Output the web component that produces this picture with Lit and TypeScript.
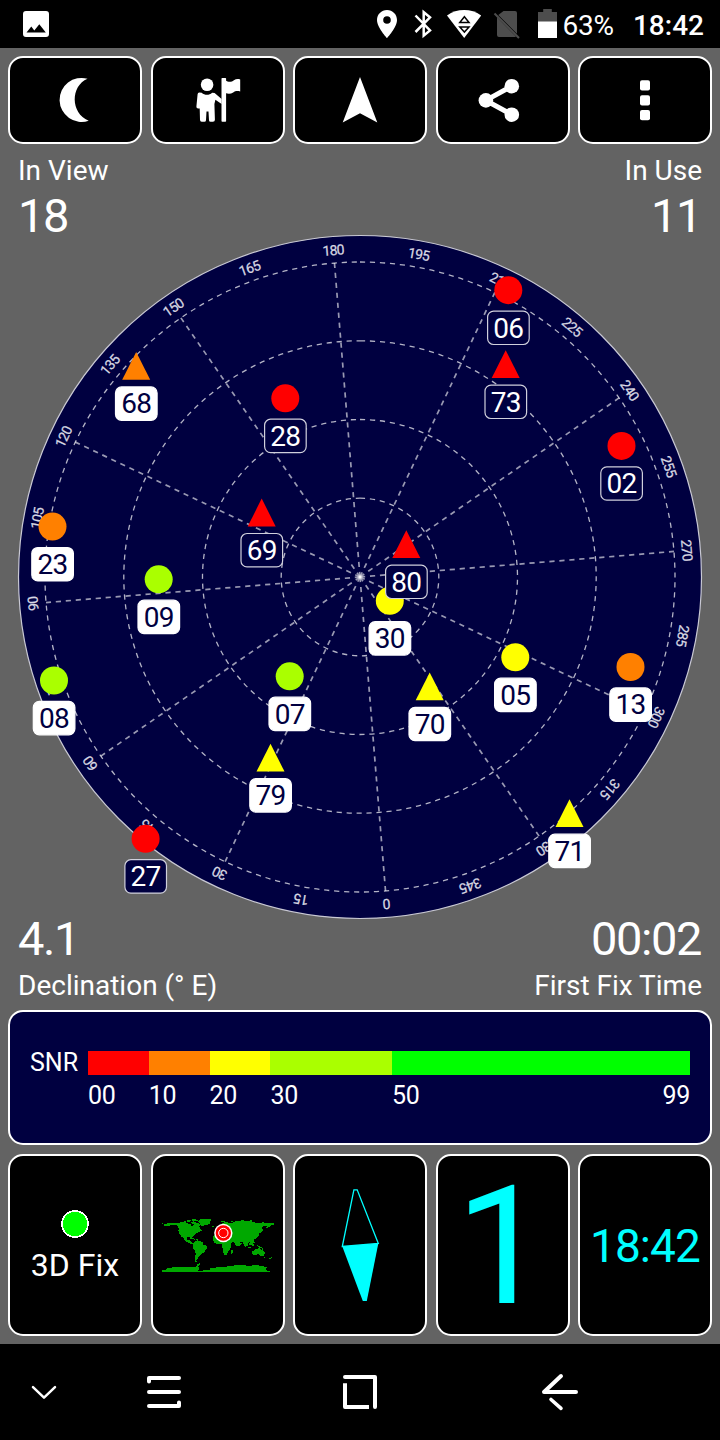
import { LitElement, html, svg, css } from "lit";
import { customElement } from "lit/decorators.js";

type Shape = "circle" | "triangle";
interface Satellite { id: string; x: number; y: number; color: string; shape: Shape; used: boolean; }

const RED = "#ff0000";
const ORANGE = "#ff8000";
const YELLOW = "#ffff00";
const LIME = "#aaff00";
const GREEN = "#00ff00";

const sat = (id: string, x: number, y: number, color: string, shape: Shape, used: boolean): Satellite => ({ id, x, y, color, shape, used });

const SATELLITES: Satellite[] = [
  sat("30", 389.8, 600.8, YELLOW, "circle", true),
  sat("68", 136.2, 366, ORANGE, "triangle", true),
  sat("06", 508.3, 290.2, RED, "circle", false),
  sat("73", 505.7, 364.2, RED, "triangle", false),
  sat("28", 285.3, 398.3, RED, "circle", false),
  sat("02", 621.5, 445.9, RED, "circle", false),
  sat("23", 52.5, 526.6, ORANGE, "circle", true),
  sat("69", 261.7, 512.6, RED, "triangle", false),
  sat("80", 406.3, 544.2, RED, "triangle", false),
  sat("09", 158.7, 579.3, LIME, "circle", true),
  sat("05", 515.3, 657.3, YELLOW, "circle", true),
  sat("13", 630.5, 667, ORANGE, "circle", true),
  sat("08", 54, 680.5, LIME, "circle", true),
  sat("07", 289.7, 676.3, LIME, "circle", true),
  sat("70", 429.7, 686.4, YELLOW, "triangle", true),
  sat("79", 270.5, 757.8, YELLOW, "triangle", true),
  sat("71", 569.5, 813.3, YELLOW, "triangle", true),
  sat("27", 145.6, 838.8, RED, "circle", false),
];

const CX = 360;
const CY = 577;
const HEADING = 175.35;
const RINGS = [315, 236.2, 157.5, 78.8];

const SNR = [
  { from: 0, to: 10, color: RED },
  { from: 10, to: 20, color: ORANGE },
  { from: 20, to: 30, color: YELLOW },
  { from: 30, to: 50, color: LIME },
  { from: 50, to: 99, color: GREEN },
];

@customElement("sky-plot")
class SkyPlot extends LitElement {
  static styles = css`
    :host { display: block; }
    svg { display: block; }
    .disc { fill: #000040; stroke: #c9c9d4; stroke-width: 1.2; }
    .grid { fill: none; stroke: #ffffff; stroke-opacity: 0.7; stroke-width: 1.3; stroke-dasharray: 5.2 4.8; }
    .spoke { stroke-width: 1.7; stroke-opacity: 0.6; }
    .deg { font: 14px Roboto, sans-serif; fill: #d8d8e2; stroke: #d8d8e2; stroke-width: 0.25; text-anchor: middle; letter-spacing: -0.8px; }
    .tag { stroke: #d0d0dc; stroke-width: 1.2; fill: #000040; }
    .tag.used { fill: #ffffff; stroke: #ffffff; }
    .num { font: 28px Roboto, sans-serif; fill: #ffffff; text-anchor: middle; letter-spacing: -0.7px; }
    .num.used { fill: #000040; }
  `;

  private spoke(deg: number) {
    const a = ((deg + HEADING) * Math.PI) / 180;
    return svg`<line class="grid spoke" x1=${CX} y1=${CY} x2=${CX + 315 * Math.sin(a)} y2=${CY - 315 * Math.cos(a)} />`;
  }

  private mark(deg: number) {
    return svg`<text class="deg" x=${CX - 0.3} y=${CY - 323} transform="rotate(${deg + HEADING} ${CX} ${CY})">${deg}</text>`;
  }

  private satellite(s: Satellite) {
    const used = s.used ? "used" : "";
    return svg`
      ${s.shape === "circle"
        ? svg`<circle cx=${s.x} cy=${s.y} r="14" fill=${s.color} />`
        : svg`<polygon fill=${s.color} points="${s.x},${s.y - 14} ${s.x + 14},${s.y + 13.8} ${s.x - 14},${s.y + 13.8}" />`}
      <rect class="tag ${used}" x=${s.x - 20.7} y=${s.y + 20.9} width="41.6" height="33.4" rx="6" />
      <text class="num ${used}" x=${s.x} y=${s.y + 47.4}>${s.id}</text>`;
  }

  render() {
    const marks = Array.from({ length: 24 }, (_, i) => i * 15);
    return html`<svg width="720" height="866" viewBox="0 144 720 866">
      <circle class="disc" cx=${CX} cy=${CY} r="341.5" />
      ${RINGS.map((r) => svg`<circle class="grid" cx=${CX} cy=${CY} r=${r} transform="rotate(-90 ${CX} ${CY})" />`)}
      ${marks.filter((d) => d % 30 === 0).map((d) => this.spoke(d))}
      ${marks.map((d) => this.mark(d))}
      ${SATELLITES.map((s) => this.satellite(s))}
    </svg>`;
  }
}

@customElement("world-map")
class WorldMap extends LitElement {
  static styles = css`
    :host { display: block; margin: 2.5px 0 0 1px; }
    svg { display: block; }
    .land { fill: #00a800; }
  `;
  render() {
    return html`<svg width="116" height="60" viewBox="30 48 348 180">
      <g class="land" shape-rendering="crispEdges">
        <path d="M36 69h4v4h-4zM48 72l6-3h34l4-3h8l4 3h8l6 3h6l-2 5 6 2 2-5 8-2 6 5 4 5 4 2-2 4 6 1v5h-6l-4 3-7 3-5 6-4 3-4 2v6h-3l-2-5-8-1-3 4 2 5h7v4l5 1 2 5h5v3h-8l-4-4-9-3-7-6-3-7-6-3-7-10-2-10 2-5-6-8-8-3-8 1-12 3-6-1-6 2v-5l3-2z" />
        <path d="M96 66l9-3 5 3-5 3h-9zM110 62l7-2h8l-4 5-9 2zM122 66l10-2 6 4 8 2 5 5-3 5-6-3-6-1-4-4-8-2zM126 58h12l8 3-10 3-10-1zM106 72h10v3h-10z" />
        <path d="M147 60l8-3h28v5l-4 3v6l-7 3-9 2-4 4-7-3-3-8-5-5z" />
        <path d="M120 114h10l5 3-1 2-14-3zM137 117h8v3h-8z" />
        <path d="M135 123l7-2 10 3 7 4v6l12 4v6l-6 7-2 6-7 3-4 6-7 5-2 6-4 2-1 8h-3l-1-12 3-13-1-8-7-9-1-7 3-8z" />
        <path d="M137 183h5v4h-5zM146 188h3v4h-3zM141 192h5v4h-5zM187 77h6v3h-6z" />
        <path d="M190 111l2-6 9-8h21l4 3 13-1 4 8 1 7 5 3h4l-5 8-5 6 1 8-4 8-5 8-5 9h-7l-3-5-2-11-1-12-4-5-12 1-9-5-3-9zM244 151l5-3v7l-3 6h-3z" />
        <path d="M195 91l4-8 6-3 6-6 8-6 12-2 7 4 5-2 5 1 2-4 8-1 9-1 7-2 6-1 7 3 10-1 8-1-2 4 8 1 8 3h13l8-3 6 3h25v7h-8l-5 4-6 5-3-2 1-6-10 2-6 6 5 2-1 5-6 6-5 3-2 9-5 2-4 5-5 3-3 7 4 6-1 4h-4l-5-10-7 1-7 12h-4l-5-13-8-2-3 2 7 3-5 7-9 3-6-8-4-7-13-1-5-4-6-2-6 3-8-2z" />
        <path d="M213 62h12v3h-12zM242 64l7-3v3l-4 3zM301 62h5v3h-5z" />
        <path d="M283 124l5 4 7 8-2 3-9-9zM293 140h10v3h-10zM298 128l7-3 2 6-3 6-6-3zM307 132h4l1 6-5-2zM302 112h3l1 7-3 1zM309 120l4 4 2 6h-4zM315 96h4v5l-6 5-4 1v-3l4-3zM319 136l8 1 6 4 5 4-7-1-6-2z" />
        <path d="M307 154l8-5 7-3 5-2 4 2 3 5 3-7 3 7 5 6-2 6-3 6h-8l-3-5-7-1-8 3h-6zM341 171h4v3h-4z" />
        <path d="M360 174h2v-3h3v-3h2v5l-6 5h-4v-3z" />
        <path d="M36 209h9l6-1v-3l16-1v-2h22v-2h40l8 1 3-5 5-4 4-3v5l-4 5 3 4v6l-8 2 15 2 8-3 16-1v-3l16-3 17-2h20v-3l20 1v-3h35l3 3h16l1-3h19l7 2 11 2 7 2-3 5v3l5 3h6v4H36z" />
      </g>
      <circle cx="220" cy="99" r="27.5" fill="#ffffff" />
      <circle cx="220" cy="99" r="23" fill="#ff0000" />
      <circle cx="220" cy="99" r="14" fill="#ff0000" stroke="#ffffff" stroke-width="3" />
    </svg>`;
  }
}

@customElement("app-root")
class AppRoot extends LitElement {
  static styles = css`
    :host { display: block; }
    svg { display: block; flex: none; }
    .app { width: 720px; height: 1440px; display: flex; flex-direction: column; background: #636363; color: #fff; font-family: Roboto, sans-serif; overflow: hidden; }
    .status { height: 48px; flex: none; background: #000; display: flex; align-items: center; padding: 0 16px 0 20px; box-sizing: border-box; }
    .spacer { flex: 1; }
    .pct { font-size: 28px; line-height: 48px; width: 53px; margin: 3px 17.5px 0 3px; white-space: nowrap; letter-spacing: -0.2px; }
    .clock { font-size: 28px; line-height: 48px; font-weight: 500; margin-top: 3px; }
    .row { display: grid; grid-template-columns: repeat(5, 134px); column-gap: 8.5px; padding: 0 8px; flex: none; }
    .tools { height: 88px; margin-top: 8px; }
    .tiles { height: 182.5px; margin-top: 8.5px; }
    .card { box-sizing: border-box; border: 2px solid #fff; border-radius: 15px; background: #000; display: flex; flex-direction: column; align-items: center; justify-content: center; }
    .sky { height: 866px; flex: none; display: grid; grid-template: 866px / 720px; }
    .sky > * { grid-area: 1 / 1; }
    .stats { display: grid; grid-template-columns: 1fr 1fr; align-content: space-between; padding: 6.7px 18px 4px; z-index: 1; }
    .stat.end { text-align: right; }
    .label { font-size: 28px; line-height: 40px; }
    .value { font-size: 47px; line-height: 50px; letter-spacing: -1.4px; }
    .value + .label { padding-top: 2px; }
    .end .value { padding-right: 1px; }
    .snr { box-sizing: border-box; height: 135px; flex: none; margin: 0 8px; border: 2px solid #fff; border-radius: 15px; background: #000040; padding: 38.5px 20px 0; display: grid; grid-template-columns: 58px 602px; align-content: start; font-size: 25px; }
    .name { line-height: 24px; }
    .bar { display: flex; height: 24.5px; }
    .scale { grid-column: 2; display: flex; line-height: 40px; margin-top: 0.9px; letter-spacing: -0.3px; }
    .last { margin-left: auto; text-align: right; }
    .fix { font-size: 32px; line-height: 40px; margin-top: 7.5px; }
    .fixdot { margin-top: 5px; }
    .big { font-size: 165px; line-height: 166px; color: #0ff; padding: 4px 1.5px 0 0; }
    .time { font-size: 46px; line-height: 54px; color: #0ff; margin-top: 3px; letter-spacing: -0.9px; }
    .nav { height: 96px; margin-top: auto; flex: none; background: #000; }
    .nav .glyph { fill: none; stroke: #fff; stroke-linecap: round; stroke-linejoin: round; }
  `;

  private tool(i: number, shape: unknown) {
    return html`<div class="card"><svg width="130" height="84" viewBox="${10 + 142.5 * i} 58 130 84" fill="#fff">${shape}</svg></div>`;
  }

  private statusBar() {
    return html`<div class="status">
      <svg width="32" height="48" viewBox="20 0 32 48"><path fill="#fff" fill-rule="evenodd" d="M26 11h20a3 3 0 0 1 3 3v20a3 3 0 0 1-3 3H26a3 3 0 0 1-3-3V14a3 3 0 0 1 3-3zM26.500 32.500h19.300l-6.500-8.300-5 6.300-3-4z" /></svg>
      <div class="spacer"></div>
      <svg width="189" height="48" viewBox="370 0 189 48">
        <path fill="#fff" fill-rule="evenodd" d="M387 10c-5.600 0-10 4.400-10 9.900C377 27.300 387 38 387 38s10-10.700 10-18.100C397 14.400 392.600 10 387 10zm0 6.200a3.800 3.800 0 1 1 0 7.600 3.800 3.800 0 0 1 0-7.600z" />
        <path fill="none" stroke="#fff" stroke-width="2.500" d="M415.500 15.500l14.500 15-6.300 5.200V12.200l6.300 5.200-14.500 14.600" />
        <path fill="#fff" d="M447 15.500c10-7.300 24.200-7.300 34.200 0L464.200 38z" />
        <g fill="none" stroke="#000" stroke-width="1.500"><path d="M459.800 22.400h9.200l-4.600-5.600zM459.800 26.900h9.200l-4.600 5.200z" /></g>
        <path fill="#4d4d4d" d="M503.500 11h11.500a2 2 0 0 1 2 2v20.800l-18.700-18.700zM497 17.300l19 19.300q-.500.400-1 .4H499a2 2 0 0 1-2-2z" /><path stroke="#4d4d4d" stroke-width="2" d="M494.500 13.500l24.500 24.500" />
        <path fill="#4d4d4d" d="M538 12h5.200V9h8.600v3h5.200v10h-19z" /><path fill="#fff" d="M538 21.500h19V38h-19z" />
      </svg>
      <div class="pct">63%</div>
      <div class="clock">18:42</div>
    </div>`;
  }

  render() {
    return html`<div class="app">
      ${this.statusBar()}
      <div class="row tools">
        ${this.tool(0, svg`<path d="M87 78.700A22 22 0 1 0 88.200 120.700C69.800 113 69.800 86 87 78.700z" transform="translate(0.500 0)" />`)}
        ${this.tool(1, svg`<g transform="translate(-0.600 0)"><circle cx="207.200" cy="84.800" r="6.300" /><rect x="221.600" y="78" width="4.600" height="43.700" rx="0.700" />
          <path d="M225.500 80.200c3 2.200 6 2 8.500 0 2-1.300 4-1.300 6.300-.8v12c-3-.8-5-.3-7 1-2.500 1.600-5 1.600-7.800.6z" />
          <path d="M199.300 92.500l2.500.2c3 2.800 7.500 2.800 10.400 0l2.500.4 7 6v5l-6.200-4.300-1 4.200.5 15.700q0 2-2 2h-2.300q-1.500 0-1.600-1.500l-.5-8.700h-2l-.5 8.700q-.1 1.500-1.600 1.500h-2.700q-1.700 0-1.700-2l-.3-11.200h-1.500q-2 0-1.800-2l1.200-12.200q.2-1.800 1.600-1.800z" /></g>`)}
        ${this.tool(2, svg`<path d="M360 77l17.300 45.600L360 113.300l-17.300 9.300z" />`)}
        ${this.tool(3, svg`<path fill="none" stroke="#fff" stroke-width="5" d="M511.300 86.200l-26 14.200 26 14.300" /><circle cx="485.400" cy="100.400" r="7.300" /><circle cx="511.300" cy="86.200" r="7.300" /><circle cx="511.300" cy="114.700" r="7.300" />`)}
        ${this.tool(4, svg`<rect x="640" y="80.300" width="10" height="10.300" rx="2" /><rect x="640" y="95.200" width="10" height="10.300" rx="2" /><rect x="640" y="110" width="10" height="10.300" rx="2" />`)}
      </div>
      <div class="sky">
        <sky-plot></sky-plot>
        <div class="stats">
          <div class="stat"><div class="label">In View</div><div class="value">18</div></div>
          <div class="stat end"><div class="label">In Use</div><div class="value">11</div></div>
          <div class="stat"><div class="value">4.1</div><div class="label">Declination (° E)</div></div>
          <div class="stat end"><div class="value">00:02</div><div class="label">First Fix Time</div></div>
        </div>
      </div>
      <div class="snr">
        <div class="name">SNR</div>
        <div class="bar">${SNR.map((s) => html`<div style="width:${((s.to - s.from) / 99) * 100}%;background:${s.color}"></div>`)}</div>
        <div class="scale">
          ${SNR.map((s, i) => html`<div style="width:${i === SNR.length - 1 ? 60 : ((s.to - s.from) / 99) * 602}px">${String(s.from).padStart(2, "0")}</div>`)}
          <div class="last">99</div>
        </div>
      </div>
      <div class="row tiles">
        <div class="card">
          <svg class="fixdot" width="28" height="28" viewBox="0 0 28 28"><circle cx="14" cy="14" r="13" fill="#0f0" stroke="#fff" stroke-width="1.500" shape-rendering="crispEdges" /></svg>
          <div class="fix">3D Fix</div>
        </div>
        <div class="card"><world-map></world-map></div>
        <div class="card"><svg width="130" height="178" viewBox="295 1155.500 130 178"><path fill="#0ff" d="M342.300 1246l36-3-11.500 57.600h-4z" /><path fill="none" stroke="#0ff" stroke-width="1.300" d="M342.300 1246l11.600-56.700h3.300l21.100 53.700z" /></svg></div>
        <div class="card"><div class="big">1</div></div>
        <div class="card"><div class="time">18:42</div></div>
      </div>
      <div class="nav">
        <svg width="720" height="96" viewBox="0 1344 720 96">
          <g class="glyph" stroke-width="2.500"><path d="M33 1387.200l11 10.400 11-10.400" /></g>
          <g class="glyph" stroke-width="4"><path d="M149 1381.500v-3.500h30M149 1392h30M149 1406h30v-3.500" />
            <path stroke-linecap="butt" d="M345 1383.300v23.700h24" /><path d="M345 1377h30v30" />
            <path d="M576 1392h-32l17-16" /><path stroke-width="3.600" d="M551 1399.500l10 8.800" /></g>
        </svg>
      </div>
    </div>`;
  }
}
